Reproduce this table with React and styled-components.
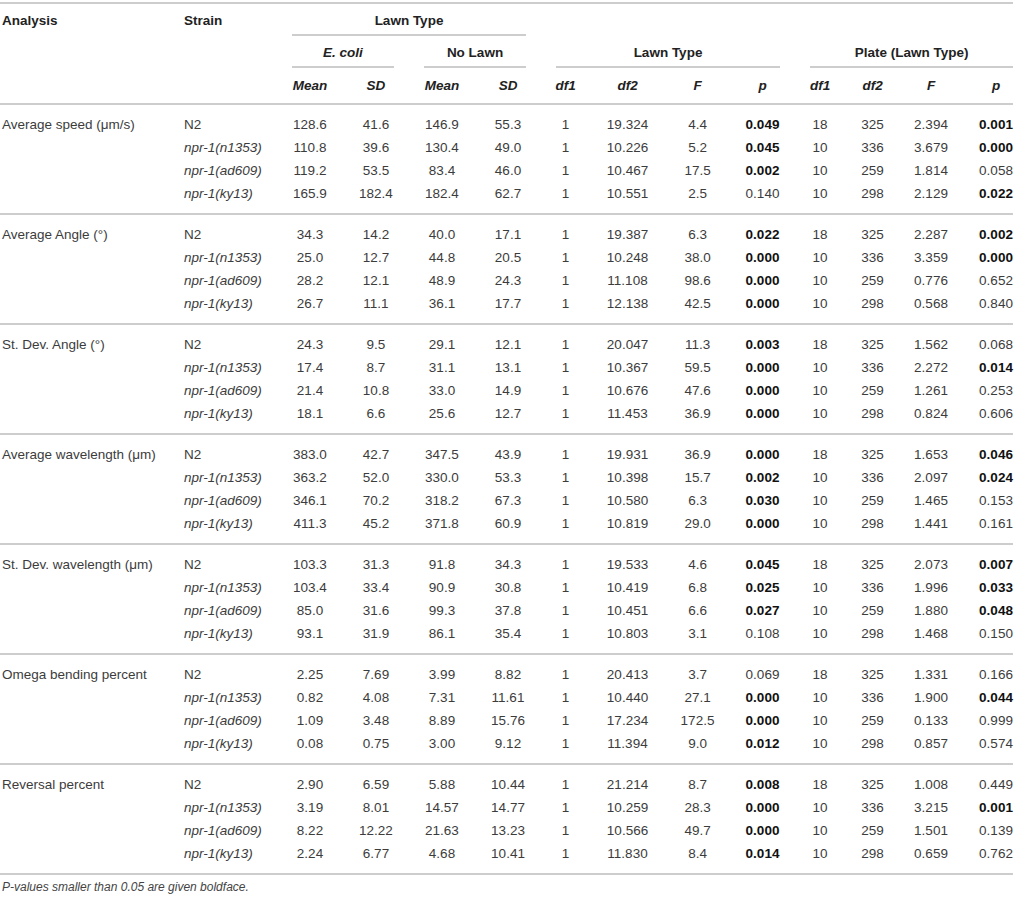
import React from "react";
import styled, { createGlobalStyle } from "styled-components";

const GlobalStyle = createGlobalStyle`
  body {
    margin: 0;
    background: #fff;
    font-family: "Liberation Sans", Arial, sans-serif;
    color: #3c3c3c;
  }
`;

const STRAINS = ["N2", "npr-1(n1353)", "npr-1(ad609)", "npr-1(ky13)"];

const GROUPS = [
  {
    label: "Average speed (\u03bcm/s)",
    rows: [
      ["128.6", "41.6", "146.9", "55.3", "1", "19.324", "4.4", "0.049", "18", "325", "2.394", "0.001"],
      ["110.8", "39.6", "130.4", "49.0", "1", "10.226", "5.2", "0.045", "10", "336", "3.679", "0.000"],
      ["119.2", "53.5", "83.4", "46.0", "1", "10.467", "17.5", "0.002", "10", "259", "1.814", "0.058"],
      ["165.9", "182.4", "182.4", "62.7", "1", "10.551", "2.5", "0.140", "10", "298", "2.129", "0.022"],
    ],
  },
  {
    label: "Average Angle (\u00b0)",
    rows: [
      ["34.3", "14.2", "40.0", "17.1", "1", "19.387", "6.3", "0.022", "18", "325", "2.287", "0.002"],
      ["25.0", "12.7", "44.8", "20.5", "1", "10.248", "38.0", "0.000", "10", "336", "3.359", "0.000"],
      ["28.2", "12.1", "48.9", "24.3", "1", "11.108", "98.6", "0.000", "10", "259", "0.776", "0.652"],
      ["26.7", "11.1", "36.1", "17.7", "1", "12.138", "42.5", "0.000", "10", "298", "0.568", "0.840"],
    ],
  },
  {
    label: "St. Dev. Angle (\u00b0)",
    rows: [
      ["24.3", "9.5", "29.1", "12.1", "1", "20.047", "11.3", "0.003", "18", "325", "1.562", "0.068"],
      ["17.4", "8.7", "31.1", "13.1", "1", "10.367", "59.5", "0.000", "10", "336", "2.272", "0.014"],
      ["21.4", "10.8", "33.0", "14.9", "1", "10.676", "47.6", "0.000", "10", "259", "1.261", "0.253"],
      ["18.1", "6.6", "25.6", "12.7", "1", "11.453", "36.9", "0.000", "10", "298", "0.824", "0.606"],
    ],
  },
  {
    label: "Average wavelength (\u03bcm)",
    rows: [
      ["383.0", "42.7", "347.5", "43.9", "1", "19.931", "36.9", "0.000", "18", "325", "1.653", "0.046"],
      ["363.2", "52.0", "330.0", "53.3", "1", "10.398", "15.7", "0.002", "10", "336", "2.097", "0.024"],
      ["346.1", "70.2", "318.2", "67.3", "1", "10.580", "6.3", "0.030", "10", "259", "1.465", "0.153"],
      ["411.3", "45.2", "371.8", "60.9", "1", "10.819", "29.0", "0.000", "10", "298", "1.441", "0.161"],
    ],
  },
  {
    label: "St. Dev. wavelength (\u03bcm)",
    rows: [
      ["103.3", "31.3", "91.8", "34.3", "1", "19.533", "4.6", "0.045", "18", "325", "2.073", "0.007"],
      ["103.4", "33.4", "90.9", "30.8", "1", "10.419", "6.8", "0.025", "10", "336", "1.996", "0.033"],
      ["85.0", "31.6", "99.3", "37.8", "1", "10.451", "6.6", "0.027", "10", "259", "1.880", "0.048"],
      ["93.1", "31.9", "86.1", "35.4", "1", "10.803", "3.1", "0.108", "10", "298", "1.468", "0.150"],
    ],
  },
  {
    label: "Omega bending percent",
    rows: [
      ["2.25", "7.69", "3.99", "8.82", "1", "20.413", "3.7", "0.069", "18", "325", "1.331", "0.166"],
      ["0.82", "4.08", "7.31", "11.61", "1", "10.440", "27.1", "0.000", "10", "336", "1.900", "0.044"],
      ["1.09", "3.48", "8.89", "15.76", "1", "17.234", "172.5", "0.000", "10", "259", "0.133", "0.999"],
      ["0.08", "0.75", "3.00", "9.12", "1", "11.394", "9.0", "0.012", "10", "298", "0.857", "0.574"],
    ],
  },
  {
    label: "Reversal percent",
    rows: [
      ["2.90", "6.59", "5.88", "10.44", "1", "21.214", "8.7", "0.008", "18", "325", "1.008", "0.449"],
      ["3.19", "8.01", "14.57", "14.77", "1", "10.259", "28.3", "0.000", "10", "336", "3.215", "0.001"],
      ["8.22", "12.22", "21.63", "13.23", "1", "10.566", "49.7", "0.000", "10", "259", "1.501", "0.139"],
      ["2.24", "6.77", "4.68", "10.41", "1", "11.830", "8.4", "0.014", "10", "298", "0.659", "0.762"],
    ],
  },
];

const WIDTHS = [182, 95, 66, 66, 66, 66, 49, 75, 65, 65, 50, 55, 62, 51];
const P_COLS = [7, 11];
const RULE = "#cdcdcd";

const Page = styled.div`
  padding-top: 2px;
  width: 1013px;
`;

const Table = styled.table`
  width: 1013px;
  table-layout: fixed;
  border-collapse: separate;
  border-spacing: 0;
  font-size: 13.5px;
`;

const Th = styled.th`
  padding: 0 ${(p) => (p.$edge ? 0 : 15)}px 0 ${(p) => (p.$inset ? 15 : 2)}px;
  vertical-align: top;
  text-align: ${(p) => (p.$left ? "left" : "center")};
  font-weight: bold;
  font-style: ${(p) => (p.$italic ? "italic" : "normal")};
  color: #222;
  border-top: ${(p) => (p.$top ? `2px solid ${RULE}` : "none")};
`;

const HeadLabel = styled.div`
  line-height: 17px;
  padding: 8px 0 5px;
  border-bottom: 2px solid ${(p) => (p.$line ? RULE : "transparent")};
  white-space: nowrap;
`;

const SubTh = styled.th`
  padding: 9px 0 9px ${(p) => (p.$shift ? 17 : 0)}px;
  line-height: 17px;
  vertical-align: middle;
  text-align: center;
  font-weight: bold;
  font-style: italic;
  color: #222;
  border-bottom: 2px solid ${RULE};
`;

const Td = styled.td`
  padding: ${(p) => (p.$first ? 8 : 0)}px 0 ${(p) => (p.$last ? 8 : 0)}px
    ${(p) => (p.$left ? 2 : p.$shift ? 17 : 0)}px;
  height: 23px;
  line-height: 23px;
  vertical-align: top;
  text-align: ${(p) => (p.$left ? "left" : "center")};
  white-space: nowrap;
  font-style: ${(p) => (p.$italic ? "italic" : "normal")};
  font-weight: ${(p) => (p.$bold ? "bold" : "normal")};
  color: ${(p) => (p.$bold ? "#111" : "#3c3c3c")};
  border-top: ${(p) => (p.$rule ? `2px solid ${RULE}` : "none")};
  border-bottom: ${(p) => (p.$end ? `2px solid ${RULE}` : "none")};
`;

const Note = styled.p`
  margin: 3px 0 0 2px;
  font-size: 12px;
  line-height: 18px;
  font-style: italic;
  color: #444;
`;

function Group({ group, index, last }) {
  return (
    <tbody>
      {group.rows.map((row, r) => {
        const first = r === 0;
        const lastRow = r === group.rows.length - 1;
        const common = {
          $first: first,
          $last: lastRow,
          $rule: first && index > 0,
          $end: last && lastRow,
        };
        return (
          <tr key={r}>
            <Td {...common} $left>
              {first ? group.label : ""}
            </Td>
            <Td {...common} $left $italic={r > 0}>
              {STRAINS[r]}
            </Td>
            {row.map((v, c) => (
              <Td
                key={c}
                {...common}
                $shift={c === 11}
                $bold={P_COLS.includes(c) && parseFloat(v) < 0.05}
              >
                {v}
              </Td>
            ))}
          </tr>
        );
      })}
    </tbody>
  );
}

export default function App() {
  const subs = ["Mean", "SD", "Mean", "SD", "df1", "df2", "F", "p", "df1", "df2", "F", "p"];
  return (
    <Page>
      <GlobalStyle />
      <Table>
        <colgroup>
          {WIDTHS.map((w, i) => (
            <col key={i} style={{ width: w }} />
          ))}
        </colgroup>
        <thead>
          <tr>
            <Th $top $left>
              <HeadLabel>Analysis</HeadLabel>
            </Th>
            <Th $top $left>
              <HeadLabel>Strain</HeadLabel>
            </Th>
            <Th $top $inset colSpan={4}>
              <HeadLabel $line>Lawn Type</HeadLabel>
            </Th>
            <Th $top colSpan={8} />
          </tr>
          <tr>
            <Th colSpan={2} />
            <Th $inset $italic colSpan={2}>
              <HeadLabel $line>E. coli</HeadLabel>
            </Th>
            <Th $inset colSpan={2}>
              <HeadLabel $line>No Lawn</HeadLabel>
            </Th>
            <Th $inset colSpan={4}>
              <HeadLabel $line>Lawn Type</HeadLabel>
            </Th>
            <Th $inset $edge colSpan={4}>
              <HeadLabel $line>Plate (Lawn Type)</HeadLabel>
            </Th>
          </tr>
          <tr>
            <SubTh colSpan={2} />
            {subs.map((s, i) => (
              <SubTh key={i} $shift={i === 11}>
                {s}
              </SubTh>
            ))}
          </tr>
        </thead>
        {GROUPS.map((g, i) => (
          <Group key={i} group={g} index={i} last={i === GROUPS.length - 1} />
        ))}
      </Table>
      <Note>P-values smaller than 0.05 are given boldface.</Note>
    </Page>
  );
}
